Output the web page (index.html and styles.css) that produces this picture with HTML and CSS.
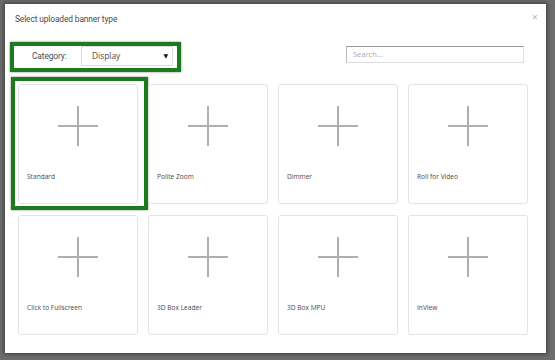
FILE: index.html
```html
<!DOCTYPE html>
<html>
<head>
<meta charset="utf-8">
<link rel="stylesheet" href="styles.css">
</head>
<body>
<div class="modal">
  <div class="modal-header">
    <span class="title">Select uploaded banner type</span>
    <span class="close">×</span>
  </div>
  <div class="toolbar">
    <div class="filter">
      <span class="filter-label">Category:</span>
      <div class="select"><span>Display</span><span class="caret">▼</span></div>
    </div>
    <div class="search">Search...</div>
  </div>
  <div class="grid">
    <div class="card selected">
      <svg class="plus" width="40" height="40" viewBox="0 0 40 40"><path d="M0 20H40M20 0V40" stroke="#b3aea9" stroke-width="2" fill="none"/></svg>
      <span class="label">Standard</span>
      <div class="highlight"></div>
    </div>
    <div class="card">
      <svg class="plus" width="40" height="40" viewBox="0 0 40 40"><path d="M0 20H40M20 0V40" stroke="#b3aea9" stroke-width="2" fill="none"/></svg>
      <span class="label">Polite Zoom</span>
    </div>
    <div class="card">
      <svg class="plus" width="40" height="40" viewBox="0 0 40 40"><path d="M0 20H40M20 0V40" stroke="#b3aea9" stroke-width="2" fill="none"/></svg>
      <span class="label">Dimmer</span>
    </div>
    <div class="card">
      <svg class="plus" width="40" height="40" viewBox="0 0 40 40"><path d="M0 20H40M20 0V40" stroke="#b3aea9" stroke-width="2" fill="none"/></svg>
      <span class="label">Roll for Video</span>
    </div>
    <div class="card">
      <svg class="plus" width="40" height="40" viewBox="0 0 40 40"><path d="M0 20H40M20 0V40" stroke="#b3aea9" stroke-width="2" fill="none"/></svg>
      <span class="label">Click to Fullscreen</span>
    </div>
    <div class="card">
      <svg class="plus" width="40" height="40" viewBox="0 0 40 40"><path d="M0 20H40M20 0V40" stroke="#b3aea9" stroke-width="2" fill="none"/></svg>
      <span class="label">3D Box Leader</span>
    </div>
    <div class="card">
      <svg class="plus" width="40" height="40" viewBox="0 0 40 40"><path d="M0 20H40M20 0V40" stroke="#b3aea9" stroke-width="2" fill="none"/></svg>
      <span class="label">3D Box MPU</span>
    </div>
    <div class="card">
      <svg class="plus" width="40" height="40" viewBox="0 0 40 40"><path d="M0 20H40M20 0V40" stroke="#b3aea9" stroke-width="2" fill="none"/></svg>
      <span class="label">InView</span>
    </div>
  </div>
</div>
</body>
</html>
```

FILE: styles.css
```css
html, body {
  margin: 0;
  padding: 0;
}
body {
  width: 555px;
  height: 360px;
  background: #6c6c6c;
  font-family: "Open Sans", "DejaVu Sans", sans-serif;
  color: #4a4a4a;
  overflow: hidden;
}
.modal {
  margin: 4px 0 0 5px;
  width: 541px;
  height: 349px;
  background: #fff;
  box-shadow: 0 0 4px 1px rgba(0, 0, 0, 0.45);
  box-sizing: border-box;
}
.modal-header {
  height: 30px;
  padding: 0 8px 0 10px;
  display: flex;
  align-items: center;
  justify-content: space-between;
}
.title {
  font-family: Roboto, "Open Sans", sans-serif;
  font-size: 8.4px;
  letter-spacing: -0.12px;
  color: #4a4a4a;
}
.close {
  font-size: 11px;
  color: #b8b8b8;
  margin-top: -5px;
}
.toolbar {
  margin-top: 8px;
  padding: 0 22px 0 5px;
  display: flex;
  align-items: flex-start;
  justify-content: space-between;
}
.filter {
  display: flex;
  align-items: flex-start;
  border: 4px solid #1d7a1d;
  padding: 0 4px 1px 18px;
  box-shadow: 0 0 2px rgba(0, 0, 0, 0.5);
}
.filter-label {
  font-family: Roboto, "Open Sans", sans-serif;
  font-size: 8.4px;
  letter-spacing: -0.12px;
  line-height: 21px;
  width: 49px;
}
.select {
  width: 92px;
  height: 20px;
  border: 1px solid #dcdcdc;
  box-sizing: border-box;
  display: flex;
  align-items: center;
  justify-content: space-between;
  padding: 0 4px 1px 10px;
  font-size: 8.4px;
}
.caret {
  font-size: 6px;
  color: #111;
}
.search {
  margin-top: 4px;
  width: 178px;
  height: 17px;
  box-sizing: border-box;
  border: 1px solid #dedede;
  border-top-color: #999;
  border-left-color: #bbb;
  font-size: 7.5px;
  color: #aaa;
  padding: 0 0 0 6px;
  line-height: 15px;
}
.grid {
  margin-top: 12px;
  padding-left: 13px;
  display: grid;
  grid-template-columns: repeat(4, 120px);
  grid-auto-rows: 120px;
  column-gap: 10px;
  row-gap: 11px;
}
.card {
  position: relative;
  border: 1px solid #e4e4e4;
  border-radius: 3px;
  box-sizing: border-box;
  display: flex;
  flex-direction: column;
  align-items: center;
}
.plus {
  margin-top: 21px;
  display: block;
}
.label {
  align-self: flex-start;
  margin: 26px 0 0 8px;
  font-size: 6.6px;
  color: #4a4a4a;
}
.highlight {
  position: absolute;
  left: -8px;
  top: -8px;
  width: 137px;
  height: 133px;
  box-sizing: border-box;
  border: 4px solid #1d7a1d;
  box-shadow: 0 0 2px rgba(0, 0, 0, 0.5);
}
```
